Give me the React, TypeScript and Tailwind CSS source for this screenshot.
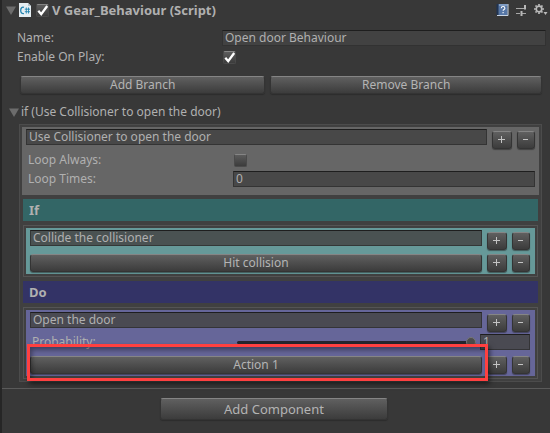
import { useId, useState } from "react";
import type { ReactNode } from "react";

const raised =
  "rounded-[3px] border border-[#343434] border-t-[#858585] bg-linear-to-b from-[#606060] to-[#3c3c3c] shadow-[0_1px_1px_#2228] text-[#b4b4b4] flex items-center justify-center";
const sunken =
  "h-4 min-w-0 border border-[#2c2c2c]/70 border-t-[#1e1e1e] px-[2px] text-[#b0b0b0] outline-none";

function Button({ children }: { children: ReactNode }) {
  return <button type="button" className={`${raised} h-[18px] min-w-0 flex-1`}>{children}</button>;
}

function AddRemove({ what }: { what: string }) {
  return (
    <div className="flex w-[43px] shrink-0 gap-[5px]">
      <button type="button" aria-label={`Add ${what}`} className={`${raised} h-[18px] w-5`}>
        <svg width="8" height="8" viewBox="0 0 8 8" aria-hidden="true"><path d="M0 3.5h7M3.5 0v7" stroke="#c4c4c4" /></svg>
      </button>
      <button type="button" aria-label={`Remove ${what}`} className={`${raised} h-[18px] w-[18px]`}>
        <svg width="8" height="8" viewBox="0 0 8 8" aria-hidden="true"><path d="M1 3.5h5" stroke="#c4c4c4" /></svg>
      </button>
    </div>
  );
}

function Check({ id, label, initial }: { id?: string; label?: string; initial: boolean }) {
  const [on, setOn] = useState(initial);
  return (
    <span className="grid size-[13px] shrink-0">
      <input
        id={id}
        aria-label={label}
        type="checkbox"
        checked={on}
        onChange={() => setOn(!on)}
        className="col-start-1 row-start-1 size-[13px] appearance-none rounded-[2px] border border-[#4a4a4a] border-t-[#858585] bg-linear-to-b from-[#5c5c5c] to-[#3c3c3c]"
      />
      {on && (
        <svg className="pointer-events-none col-start-1 row-start-1" width="13" height="13" viewBox="0 0 13 13" aria-hidden="true">
          <path d="M2.300 6.800 5.200 10.200 11.200 2" fill="none" stroke="#fff" strokeWidth="2.300" />
        </svg>
      )}
    </span>
  );
}

function TextBox({ value, label, id, className }: { value: string; label?: string; id?: string; className: string }) {
  return <input id={id} aria-label={label} type="text" defaultValue={value} className={`${sunken} ${className}`} />;
}

function Foldout() {
  return (
    <svg width="10" height="9" viewBox="0 0 10 9" aria-hidden="true">
      <path d="M0 .5h10L5 9z" fill="#6c6c6c" />
    </svg>
  );
}

function ScriptIcon() {
  return (
    <svg width="12" height="14" viewBox="0 0 12 14" aria-hidden="true">
      <path d="M0 0h9l3 3v11H0z" fill="#e6eef2" />
      <path d="M9 0v3h3" fill="#b4c4cc" />
      <path d="M5 4.300C3 3.600 1.700 5 1.700 7.400S3 11.100 5 10.500" fill="none" stroke="#2384b0" strokeWidth="1.300" />
      <path d="M7.300 4.500v6M9.500 4.500v6M5.800 6.200h5.200M5.800 8.700h5.200" stroke="#2384b0" strokeWidth=".9" />
    </svg>
  );
}

function BookIcon() {
  return (
    <svg width="13" height="14" viewBox="0 0 13 14" aria-hidden="true">
      <path d="M.5 1.500 2.500.5v12l-2-1z" fill="#1f3353" />
      <path d="M2.500 1h9v11h-9z" fill="#5576a6" />
      <path d="M3 1h8.500v2H3z" fill="#7f9cc4" />
      <path d="M1 12.500h11V1" fill="none" stroke="#c9d4e2" />
      <path d="M5.300 5.200c0-2.200 3.600-2.200 3.600 0 0 1.300-1.800 1.300-1.800 2.600M7.100 9v1.300" fill="none" stroke="#fff" strokeWidth="1.100" />
    </svg>
  );
}

function PresetIcon() {
  return (
    <svg width="11" height="13" viewBox="0 0 11 13" aria-hidden="true">
      <path d="M0 4.500h7M7 4.500h3M0 9.500h4M6 9.500h4" fill="none" stroke="#a8a8a8" />
      <path d="M9 1v4.500M5.500 7v5" fill="none" stroke="#b8b8b8" strokeWidth="2" />
    </svg>
  );
}

function GearIcon() {
  return (
    <svg width="14" height="12" viewBox="0 0 14 12" aria-hidden="true">
      <circle cx="5" cy="5" r="2.800" fill="none" stroke="#bababa" strokeWidth="1.700" />
      <path d="M5 0v1.800M5 8.200V10M0 5h1.800M8.200 5H10M1.500 1.500l1.200 1.200M7.300 7.300l1.200 1.200M1.500 8.500l1.200-1.200M7.300 2.700l1.200-1.200" stroke="#bababa" strokeWidth="1.700" />
      <path d="M9.500 8h4l-2 3z" fill="#bababa" />
    </svg>
  );
}

function IconButton({ label, children }: { label: string; children: ReactNode }) {
  return <button type="button" aria-label={label}>{children}</button>;
}

function Band({ children, className }: { children: ReactNode; className: string }) {
  return <h2 className={`mx-px flex h-[22px] items-center px-[6px] text-[13px] font-bold ${className}`}>{children}</h2>;
}

function Frame({ children, className }: { children: ReactNode; className: string }) {
  return (
    <div className="mx-px border border-[#545454] p-[2px]">
      <div className={`pt-[2px] pr-[5px] pb-[2px] pl-1 ${className}`}>{children}</div>
    </div>
  );
}

function NamedRow({ value, what, className }: { value: string; what: string; className: string }) {
  return (
    <div className="flex h-5 items-start gap-[5px]">
      <TextBox value={value} label={`${what} name`} className={`flex-1 ${className}`} />
      <div className="pt-[2px]"><AddRemove what={what} /></div>
    </div>
  );
}

export default function App() {
  const id = useId();
  const [probability, setProbability] = useState("1");
  return (
    <main className="min-h-screen border-l-2 border-[#262626] bg-[#383838] font-['Noto_Sans',sans-serif] text-[12px] leading-4 text-[#b0b0b0]">
      <header className="flex h-5 items-center pr-[2px] pl-1">
        <IconButton label="Collapse component"><Foldout /></IconButton>
        <span className="ml-[3px]"><ScriptIcon /></span>
        <span className="ml-[5px]"><Check label="Component enabled" initial /></span>
        <h1 className="ml-[3px] flex-1 text-[13px] font-bold">V Gear_Behaviour (Script)</h1>
        <div className="flex items-center gap-[7px]">
          <IconButton label="Help"><BookIcon /></IconButton>
          <IconButton label="Presets"><PresetIcon /></IconButton>
          <IconButton label="Settings"><GearIcon /></IconButton>
        </div>
      </header>

      <section className="mt-[10px] pr-1 pl-[15px]">
        <div className="flex items-center">
          <label htmlFor={`${id}-name`} className="w-[205px] shrink-0">Name:</label>
          <TextBox id={`${id}-name`} value="Open door Behaviour" className="flex-1 bg-[#424242]" />
        </div>
        <div className="mt-[2px] flex h-[18px] items-center">
          <label htmlFor={`${id}-play`} className="w-[206px] shrink-0">Enable On Play:</label>
          <Check id={`${id}-play`} initial />
        </div>
      </section>

      <div className="mt-[10px] flex gap-[5px] pr-2 pl-[18px]">
        <div className="flex w-[47%]"><Button>Add Branch</Button></div>
        <Button>Remove Branch</Button>
      </div>

      <button type="button" className="mt-[10px] ml-[7px] flex h-4 items-center gap-[2px]">
        <Foldout />
        if (Use Collisioner to open the door)
      </button>

      <section className="mt-1 mr-2 ml-[17px] flex flex-col gap-1 border border-[#4c4c4c] bg-[#404040] p-[2px]">
        <div className="bg-[#666666] pt-[2px] pr-1 pb-2 pl-1">
          <NamedRow value="Use Collisioner to open the door" what="branch" className="bg-[#484848]" />
          <div className="mt-[2px] flex h-[18px] items-center pl-[2px]">
            <label htmlFor={`${id}-always`} className="w-[206px] shrink-0">Loop Always:</label>
            <Check id={`${id}-always`} initial={false} />
          </div>
          <div className="mt-[2px] flex items-center pl-[2px]">
            <label htmlFor={`${id}-times`} className="w-[205px] shrink-0">Loop Times:</label>
            <TextBox id={`${id}-times`} value="0" className="flex-1 bg-[#484848]" />
          </div>
        </div>

        <Band className="bg-[#336666]">If</Band>
        <Frame className="bg-[#669999]">
          <NamedRow value="Collide the collisioner" what="condition" className="bg-[#4a5252]" />
          <div className="mt-1 flex gap-[5px]">
            <Button>Hit collision</Button>
            <AddRemove what="condition event" />
          </div>
        </Frame>

        <Band className="bg-[#333366]">Do</Band>
        <Frame className="bg-[#666699]">
          <NamedRow value="Open the door" what="action group" className="bg-[#4a4a52]" />
          <div className="mt-[2px] flex h-4 items-center pl-[2px]">
            <label htmlFor={`${id}-probability`} className="w-[205px] shrink-0">Probability:</label>
            <input
              id={`${id}-probability`}
              type="range"
              min="0"
              max="1"
              step="0.01"
              value={probability}
              onChange={(e) => setProbability(e.target.value)}
              className="h-[3px] min-w-0 flex-1 appearance-none rounded-full bg-[#26262e] [&::-webkit-slider-thumb]:size-[10px] [&::-webkit-slider-thumb]:appearance-none [&::-webkit-slider-thumb]:rounded-full [&::-webkit-slider-thumb]:border [&::-webkit-slider-thumb]:border-[#777777] [&::-webkit-slider-thumb]:bg-[#4c4c4c]"
            />
            <input
              type="text"
              aria-label="Probability value"
              value={probability}
              onChange={(e) => setProbability(e.target.value)}
              className={`${sunken} ml-1 w-[50px] shrink-0 bg-[#4a4a52]`}
            />
          </div>
          <div className="relative mt-[6px] flex gap-[5px]">
            <Button>Action 1</Button>
            <AddRemove what="action" />
            <div className="pointer-events-none absolute -top-3 right-[42px] -bottom-[7px] -left-[3px] border-[3px] border-[#ff4040] shadow-[2px_3px_5px_#0008,inset_2px_3px_5px_#0006]" />
          </div>
        </Frame>
      </section>

      <div className="mt-[6px] flex justify-center border-t border-[#5a5a5a] pt-[9px] pr-1">
        <button type="button" className={`${raised} h-[22px] w-[228px] text-[13px]`}>Add Component</button>
      </div>
    </main>
  );
}
